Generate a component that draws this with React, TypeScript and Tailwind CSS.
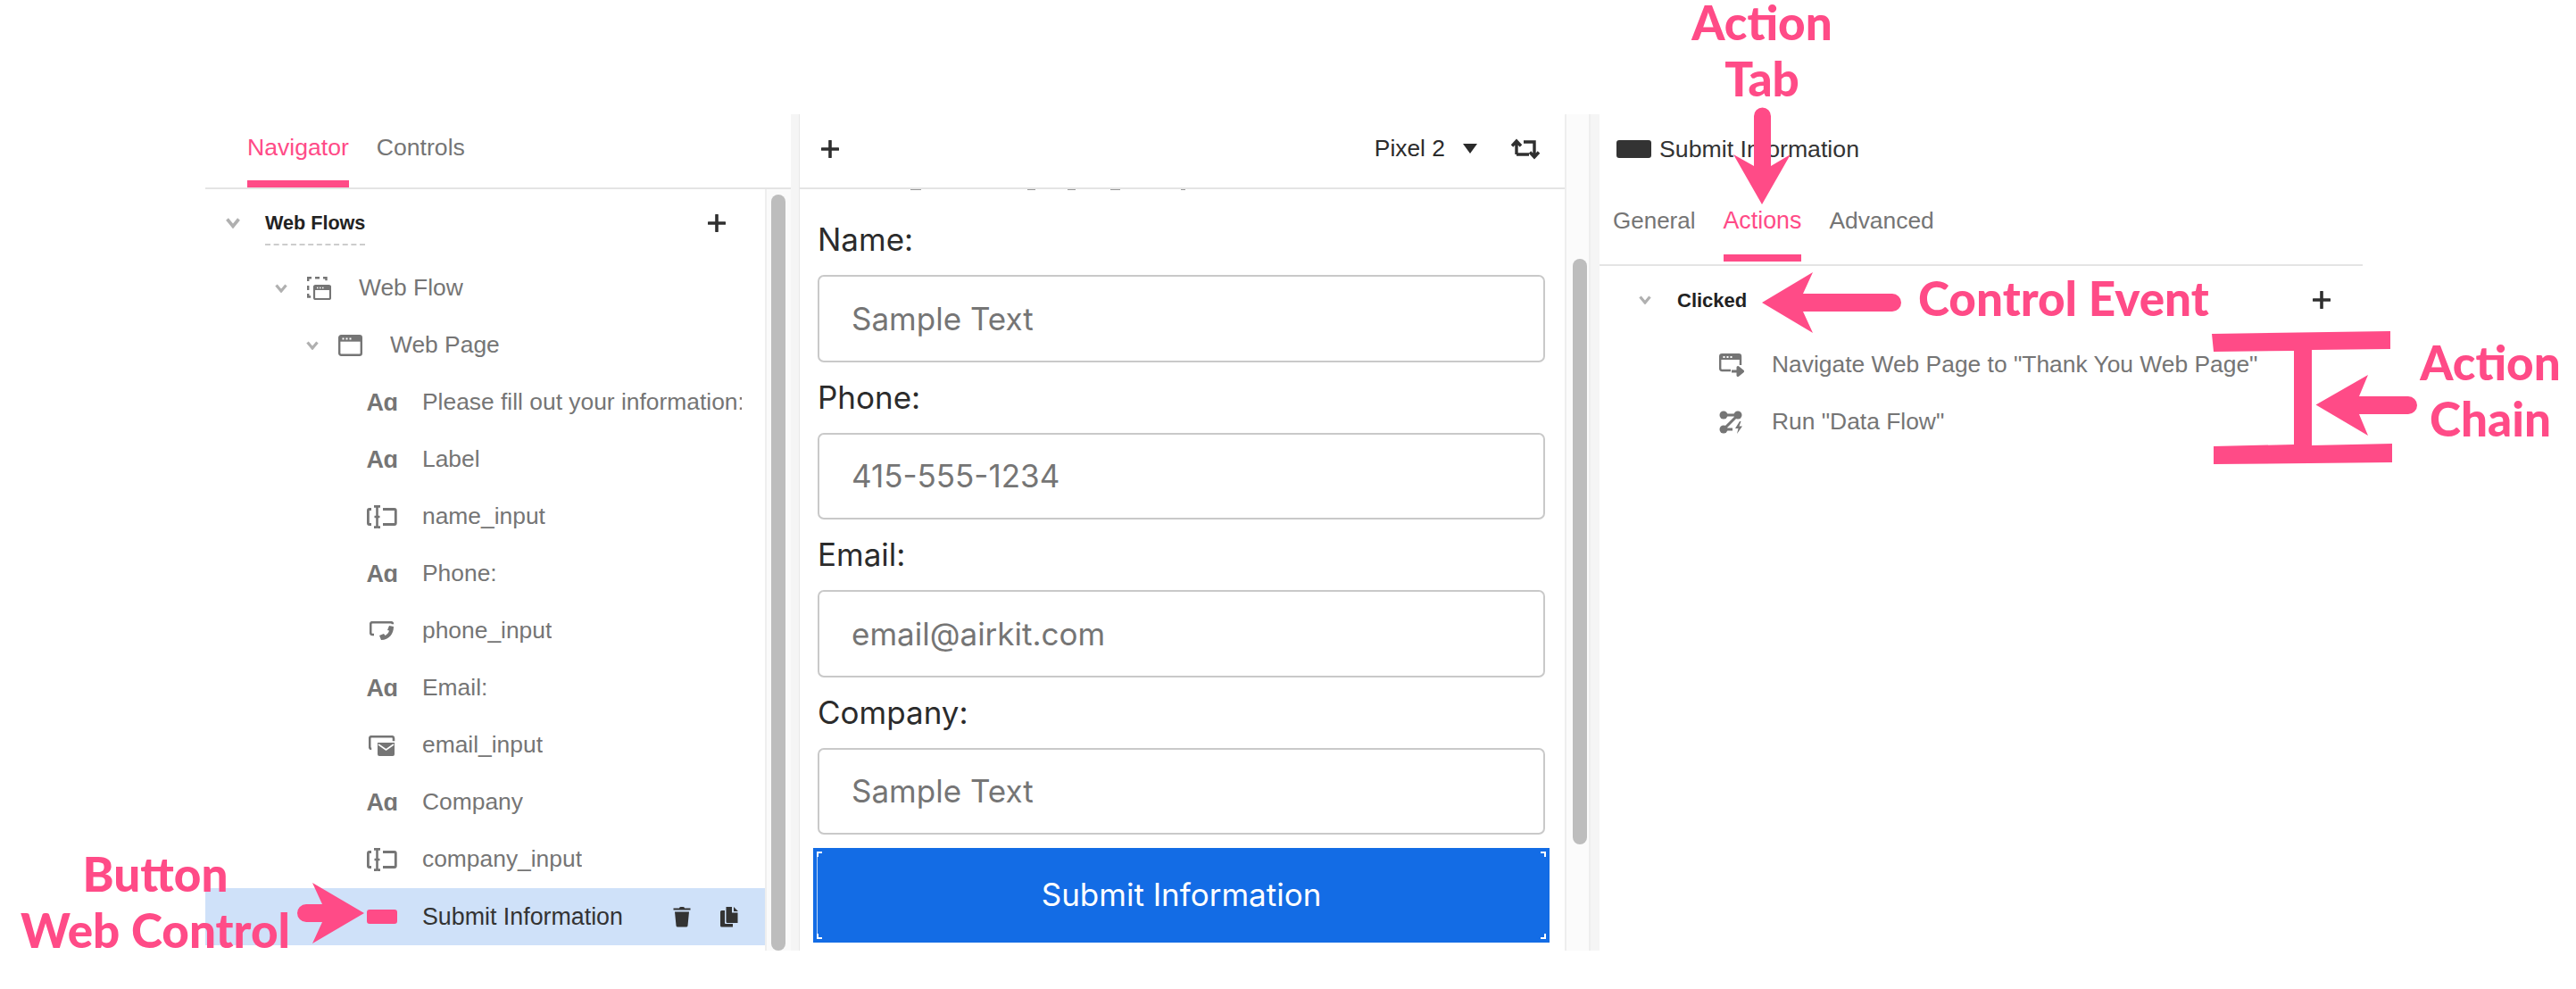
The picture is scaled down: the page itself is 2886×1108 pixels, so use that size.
import type { ReactNode } from "react";

const helv = "font-['Liberation_Sans',Arial,sans-serif]";

function Chevron({ small }: { small?: boolean }) {
  return small ? (
    <svg width="14" height="10" viewBox="0 0 14 10" className="shrink-0">
      <path d="M1.500 1.500L7 8l5.500-6.500" fill="none" stroke="#b0b0b0" strokeWidth="3.200" />
    </svg>
  ) : (
    <svg width="16" height="12" viewBox="0 0 16 12" className="shrink-0">
      <path d="M1.500 1.500L8 9.500l6.500-8" fill="none" stroke="#b0b0b0" strokeWidth="3.600" />
    </svg>
  );
}

function Plus() {
  return (
    <svg width="20" height="20" viewBox="0 0 20 20" className="shrink-0">
      <path d="M10 1v18M1 10h18" stroke="#2f2f2f" strokeWidth="3.600" strokeLinecap="round" />
    </svg>
  );
}

function WebFlowIcon() {
  return (
    <svg width="27" height="26" viewBox="0 0 27 26" className="shrink-0">
      <path d="M1.200 5V1.200H5M9 1.200h5M18 1.200h3.500v3M1.200 10v5M1.200 19v3.500h3" fill="none" stroke="#757575" strokeWidth="2.400" />
      <rect x="8" y="10" width="18" height="15" rx="1.500" fill="none" stroke="#757575" strokeWidth="2.200" />
      <rect x="8" y="10" width="18" height="5" fill="#757575" />
      <path d="M11 12.500h1.500M14 12.500h1.500M17 12.500h1.500" stroke="#fff" strokeWidth="1.400" />
    </svg>
  );
}

function WebPageIcon() {
  return (
    <svg width="27" height="24" viewBox="0 0 27 24" className="shrink-0">
      <rect x="1.200" y="1.200" width="24.600" height="21.600" rx="2" fill="none" stroke="#757575" strokeWidth="2.400" />
      <rect x="1.200" y="1.200" width="24.600" height="6.500" fill="#757575" />
      <path d="M4.500 4.500h2M8.500 4.500h2M12.500 4.500h2" stroke="#fff" strokeWidth="1.800" />
    </svg>
  );
}

function AaIcon() {
  return <span className={`${helv} text-[27px] leading-none font-bold text-[#757575] tracking-[-0.5px]`}>Aɑ</span>;
}

function InputIcon() {
  return (
    <svg width="34" height="26" viewBox="0 0 34 26" className="shrink-0">
      <path d="M5 4.500H2.800Q1.400 4.500 1.400 6v14q0 1.500 1.400 1.500H5M18 4.500h12.800q1.500 0 1.500 1.500v14q0 1.500-1.500 1.500H18" fill="none" stroke="#757575" strokeWidth="2.800" />
      <path d="M8 1.400h2.500l1 1 1-1H15M8 24.600h2.500l1-1 1 1H15M11.500 2v22M8.500 13h6" fill="none" stroke="#757575" strokeWidth="2.600" />
    </svg>
  );
}

function PhoneIcon() {
  return (
    <svg width="28" height="22" viewBox="0 0 28 22" className="shrink-0">
      <path d="M5 15H3.200q-2 0-2-2V3.200q0-2 2-2H24q2 0 2 2" fill="none" stroke="#757575" strokeWidth="2.600" />
      <path d="M22 5l5 1c0 8-5 15-14 15l-2-5 5-2 1.500 2c2-1 4-3 4.500-5.500L20 10z" fill="#757575" />
    </svg>
  );
}

function EmailIcon() {
  return (
    <svg width="30" height="23" viewBox="0 0 30 23" className="shrink-0">
      <path d="M3.200 15q-2 0-2-2V3.200q0-2 2-2H26q2 0 2 2v3" fill="none" stroke="#757575" strokeWidth="2.600" />
      <path d="M10 8h19v13q0 2-2 2H12q-2 0-2-2z" fill="#757575" />
      <path d="M11 10l8.500 6 8.500-6" fill="none" stroke="#fff" strokeWidth="1.600" />
    </svg>
  );
}

function NavigateIcon() {
  return (
    <svg width="28" height="27" viewBox="0 0 28 27" className="shrink-0">
      <path d="M13 19H3.200q-2 0-2-2V3.200q0-2 2-2H22q2 0 2 2V13" fill="none" stroke="#757575" strokeWidth="2.400" />
      <rect x="1" y="1" width="23" height="6" fill="#757575" />
      <path d="M4.500 4h2M8.500 4h2M12.500 4h2" stroke="#fff" strokeWidth="1.800" />
      <path d="M14 20h8M21 15.500l5.500 4.500-5.500 4.500z" stroke="#757575" strokeWidth="3" fill="#757575" strokeLinejoin="round" />
    </svg>
  );
}

function RunIcon() {
  return (
    <svg width="28" height="26" viewBox="0 0 28 26" className="shrink-0">
      <circle cx="5" cy="5" r="4.500" fill="#757575" />
      <circle cx="21" cy="5" r="4.500" fill="#757575" />
      <circle cx="5" cy="21" r="4.500" fill="#757575" />
      <path d="M5 5h16L5 21h10" fill="none" stroke="#757575" strokeWidth="3" />
      <path d="M23 12l-5 8h3.500l-1.500 6 6-8.500h-3.500l2-5.500z" fill="#757575" />
    </svg>
  );
}

function TrashIcon() {
  return (
    <svg width="20" height="24" viewBox="0 0 20 24" className="shrink-0">
      <path d="M7 2.500Q7 1 8.500 1h3Q13 1 13 2.500H19.500V4.500H.5V2.500zM2 6.500h16L16.500 22q0 1.500-2 1.500h-9q-2 0-2-1.500z" fill="#333" />
    </svg>
  );
}

function CopyIcon() {
  return (
    <svg width="20" height="24" viewBox="0 0 20 24" className="shrink-0">
      <path d="M5 5H1.500Q0 5 0 6.500V22q0 1.500 1.500 1.500H14V20H6q-1 0-1-1z" fill="#333" />
      <path d="M6.500 1H13v6.500h6.500V19H8q-1.500 0-1.500-1.500zM15 1l5 5h-5z" fill="#333" />
    </svg>
  );
}

function TreeRow({ pl, icon, label, selected, chevron, right }: { pl: string; icon: ReactNode; label: string; selected?: boolean; chevron?: boolean; right?: ReactNode }) {
  return (
    <div className={`flex h-16 items-center ${pl} ${selected ? "bg-[#cfe1f9] text-[26.8px] text-[#333]" : "text-[#757575]"}`}>
      {chevron && (
        <div className="mr-[22px] flex w-[14px] justify-center">
          <Chevron small />
        </div>
      )}
      <div className={`flex items-center justify-center ${chevron ? "mr-[31px] w-[27px]" : "mr-[28px] w-[34px]"}`}>{icon}</div>
      <span className="max-w-[358px] overflow-hidden whitespace-nowrap">{label}</span>
      {right}
    </div>
  );
}

function FormField({ label, placeholder }: { label: string; placeholder: string }) {
  return (
    <>
      <div className="flex h-[79px] items-center text-[#2b2b2b]">{label}</div>
      <div className="flex h-[97.5px] w-[815px] items-center rounded-[7px] border-[2.5px] border-[#c9c9c9] pl-[36px] text-[#757575]">
        {placeholder}
      </div>
    </>
  );
}

function Corner({ className }: { className: string }) {
  return <span className={`absolute h-[6px] w-[6px] border-white ${className}`} />;
}

function Note({ className, lines }: { className: string; lines: string[] }) {
  return (
    <div className={`absolute flex flex-col gap-[13px] text-center font-['Lato',sans-serif] text-[53px] leading-[50px] font-black whitespace-nowrap text-[#ff4b87] ${className}`}>
      {lines.map((l) => (
        <div key={l}>{l}</div>
      ))}
    </div>
  );
}

export default function App() {
  const rows = [
    { icon: <AaIcon />, label: "Please fill out your information:" },
    { icon: <AaIcon />, label: "Label" },
    { icon: <InputIcon />, label: "name_input" },
    { icon: <AaIcon />, label: "Phone:" },
    { icon: <PhoneIcon />, label: "phone_input" },
    { icon: <AaIcon />, label: "Email:" },
    { icon: <EmailIcon />, label: "email_input" },
    { icon: <AaIcon />, label: "Company" },
    { icon: <InputIcon />, label: "company_input" },
  ];

  return (
    <div className={`relative h-[1108px] w-[2886px] overflow-hidden bg-white pt-[128px] pl-[230px] ${helv} text-[26.4px]`}>
      <div className="flex h-[937px]">
        {/* Navigator panel */}
        <div className="flex w-[656px] flex-col">
          <div className="flex h-[84px] shrink-0 gap-[31px] border-b-2 border-[#e4e4e4] pl-[47px] text-[26.6px]">
            <div className="flex h-[82px] flex-col justify-between text-[#ff4b87]">
              <span className="pt-[22px] leading-[30px]">Navigator</span>
              <span className="h-2 bg-[#ff4b87]" />
            </div>
            <span className="pt-[22px] leading-[30px] text-[#757575]">Controls</span>
          </div>
          <div className="flex min-h-0 flex-1">
            <div className="w-[627px]">
              <div className="flex h-[79px] items-center justify-between pr-[44px] pb-[3px] pl-[23px]">
                <div className="flex items-center">
                  <Chevron />
                  <span className="ml-[28px] border-b-2 border-dashed border-[#cccccc] pt-[11px] pb-[10px] text-[21.6px] leading-[26px] font-bold text-[#222]">
                    Web Flows
                  </span>
                </div>
                <Plus />
              </div>
              <TreeRow pl="pl-[78px]" chevron icon={<WebFlowIcon />} label="Web Flow" />
              <TreeRow pl="pl-[113px]" chevron icon={<WebPageIcon />} label="Web Page" />
              {rows.map((r) => (
                <TreeRow key={r.label} pl="pl-[181px]" icon={r.icon} label={r.label} />
              ))}
              <TreeRow
                pl="pl-[181px]"
                selected
                icon={<span className="h-4 w-[34px] rounded-[3px] bg-[#ff4b87]" />}
                label="Submit Information"
                right={
                  <div className="ml-[56px] flex items-center gap-[33px]">
                    <TrashIcon />
                    <CopyIcon />
                  </div>
                }
              />
            </div>
            <div className="w-[29px] border-l-2 border-[#eeeeee] bg-[#fafafa] pt-[6px] pl-[5px]">
              <div className="h-[847px] w-4 rounded-full bg-[#bdbdbd]" />
            </div>
          </div>
        </div>

        <div className="w-[9px] bg-[#f5f5f5]" />

        {/* Preview panel */}
        <div className="flex w-[858px] flex-col border-l border-[#e8e8e8]">
          <div className="flex h-[84px] shrink-0 items-center justify-between border-b-2 border-[#e4e4e4] pr-[26px] pb-[4px] pl-[24px] text-[#2b2b2b]">
            <Plus />
            <div className="flex items-center">
              <span>Pixel 2</span>
              <svg width="16" height="11" viewBox="0 0 16 11" className="ml-[20px]">
                <path d="M0 0h16l-8 11z" fill="#2b2b2b" />
              </svg>
              <svg width="34" height="24" viewBox="0 0 34 24" className="ml-[38px]">
                <path d="M6 18V4M14 4h12v16M6 18h14M1 8.500L6 3l5 5.500M21 15.500l5 5.500 5-5.500" fill="none" stroke="#2f2f2f" strokeWidth="3.400" />
              </svg>
            </div>
          </div>
          <div className="flex min-h-0 flex-1 flex-col overflow-hidden pl-[20px] font-['Inter',sans-serif] text-[35px]">
            <div className="flex h-[17px] shrink-0 items-start">
              <span className="ml-[104px] h-px w-3 bg-[#999]" />
              <span className="ml-[119px] h-px w-[9px] bg-[#999]" />
              <span className="ml-9 h-px w-[9px] bg-[#999]" />
              <span className="ml-[39px] h-px w-[11px] bg-[#999]" />
              <span className="ml-[68px] h-px w-[5px] bg-[#999]" />
            </div>
            <FormField label="Name:" placeholder="Sample Text" />
            <FormField label="Phone:" placeholder="415-555-1234" />
            <FormField label="Email:" placeholder="email@airkit.com" />
            <FormField label="Company:" placeholder="Sample Text" />
            <div className="relative mt-[14.500px] -ml-[5px] flex h-[106px] w-[825px] shrink-0 items-center justify-center bg-[#136ce5] text-white">
              Submit Information
              <span className="absolute top-1 bottom-1 left-1 w-px bg-white/70" />
              <Corner className="top-1 left-1 border-t-2 border-l-2" />
              <Corner className="top-1 right-1 border-t-2 border-r-2" />
              <Corner className="bottom-1 left-1 border-b-2 border-l-2" />
              <Corner className="right-1 bottom-1 border-r-2 border-b-2" />
            </div>
          </div>
        </div>

        <div className="w-[29px] border-x-2 border-[#eeeeee] bg-[#fbfbfb] pt-[162px] pl-[7px]">
          <div className="h-[656px] w-4 rounded-full bg-[#bdbdbd]" />
        </div>
        <div className="w-[10px] bg-[#f5f5f5]" />

        {/* Properties panel */}
        <div className="flex w-[855px] flex-col">
          <div className="flex h-[76px] shrink-0 items-center pt-[2px] pl-[19px] text-[26.7px] text-[#333]">
            <span className="mr-[9px] h-5 w-[39px] rounded-[3px] bg-[#333]" />
            Submit Information
          </div>
          <div className="flex h-[94px] shrink-0 gap-[31px] border-b-2 border-[#e4e4e4] pl-[15px]">
            <span className="pt-[28px] text-[26px] leading-[30px] text-[#757575]">General</span>
            <div className="flex h-[89px] flex-col justify-between text-[26.8px] text-[#ff4b87]">
              <span className="pt-[28px] leading-[30px]">Actions</span>
              <span className="h-2 bg-[#ff4b87]" />
            </div>
            <span className="pt-[28px] leading-[30px] text-[#757575]">Advanced</span>
          </div>
          <div className="flex h-[79px] shrink-0 items-center justify-between pr-9 pb-[3px] pl-[44px]">
            <div className="flex items-center">
              <Chevron small />
              <span className="ml-[29px] text-[22px] font-bold text-[#222]">Clicked</span>
            </div>
            <Plus />
          </div>
          <div className="flex h-16 items-center pl-[134px] text-[#757575]">
            <NavigateIcon />
            <span className="ml-[31px]">Navigate Web Page to "Thank You Web Page"</span>
          </div>
          <div className="flex h-16 items-center pl-[134px] text-[#757575]">
            <RunIcon />
            <span className="ml-[31px]">Run "Data Flow"</span>
          </div>
        </div>
      </div>

      {/* Annotations */}
      <Note className="top-0 left-[1874px] w-[200px]" lines={["Action", "Tab"]} />
      <Note className="top-[309px] left-[2149px]" lines={["Control Event"]} />
      <Note className="top-[381px] left-[2690px] w-[200px]" lines={["Action", "Chain"]} />
      <Note className="top-[954px] left-0 w-[348px]" lines={["Button", "Web Control"]} />

      <svg width="2886" height="1108" viewBox="0 0 2886 1108" className="pointer-events-none absolute top-0 left-0">
        <g fill="#ff4b87">
          <path d="M1965 130a9.500 9.500 0 0 1 19 0v56l22-13-32 56-32-56 23 13z" />
          <path d="M1974 339l57-34-11 24h100a10 10 0 0 1 0 20h-100l11 24z" />
          <path d="M2478 374l200-3v20l-88 1v107l90-2v21l-200 2v-20l90-2V393l-90 1z" />
          <path d="M2594.500 453.500l58.500-33.500-10 24h55a10 10 0 0 1 0 20h-55l10 24z" />
          <path d="M408 1023l-58-34 11 24h-18a10 10 0 0 0 0 20h18l-11 24z" />
        </g>
      </svg>
    </div>
  );
}
